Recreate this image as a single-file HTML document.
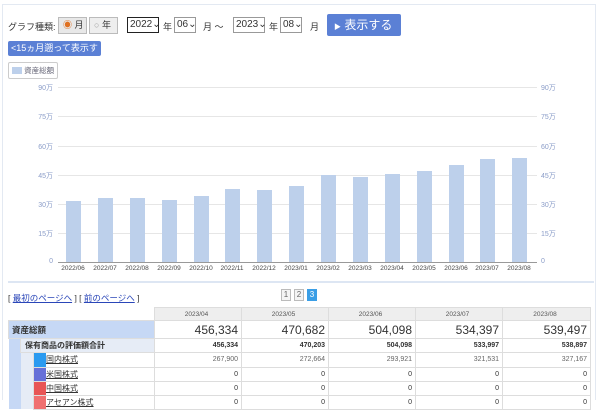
<!DOCTYPE html>
<html><head><meta charset="utf-8"><style>
*{margin:0;padding:0;box-sizing:border-box}
body{width:600px;height:400px;overflow:hidden;background:#fff;font-family:"Liberation Sans","Noto Sans CJK JP",sans-serif;font-size:9px;color:#333;position:relative}
.a{position:absolute}
.sel{position:absolute;border:1px solid #999;height:16px;top:17px;font-size:10px;line-height:14px;padding-left:2px;background:#fff}
.gl{position:absolute;left:58px;width:479px;height:1px;background:#e6e6e6}
.yl{position:absolute;font-size:7px;color:#8a9cc8;width:20px;text-align:right;left:33px}
.yr{position:absolute;font-size:7px;color:#8a9cc8;left:541px}
.bar{position:absolute;width:15px;background:#bdd0eb;bottom:138px}
.xl{position:absolute;top:265px;font-size:6.5px;color:#444;width:32px;text-align:center}
td{border:1px solid #ddd;font-size:7px;text-align:right;padding-right:3px}
</style></head><body>
<div class="a" style="left:2px;top:4px;width:594px;height:1px;background:#e3e9f2"></div>
<div class="a" style="left:2px;top:4px;width:1px;height:396px;background:#e3e9f2"></div>
<div class="a" style="left:595px;top:4px;width:1px;height:396px;background:#e3e9f2"></div>
<div class="a" style="left:8px;top:20px;font-size:9px">グラフ種類:</div>
<div class="a" style="left:58px;top:17px;width:29px;height:17px;border:1px solid #bbb;background:#e8e8e8;font-size:9px;line-height:15px;padding-left:4px"><span style="color:#e07020">◉</span> 月</div>
<div class="a" style="left:89px;top:17px;width:29px;height:17px;border:1px solid #bbb;background:#eee;font-size:9px;line-height:15px;padding-left:4px"><span style="color:#999">○</span> 年</div>
<div class="sel" style="left:127px;width:32px;border:1px solid #222">2022⌄</div>
<div class="a" style="left:163px;top:20px;font-size:9px">年</div>
<div class="sel" style="left:174px;width:22px">06⌄</div>
<div class="a" style="left:203px;top:20px;font-size:9px">月 ～</div>
<div class="sel" style="left:233px;width:32px">2023⌄</div>
<div class="a" style="left:269px;top:20px;font-size:9px">年</div>
<div class="sel" style="left:280px;width:22px">08⌄</div>
<div class="a" style="left:310px;top:20px;font-size:9px">月</div>
<div class="a" style="left:327px;top:14px;width:74px;height:22px;background:#5b80d5;border-radius:2px;color:#fff;font-size:12px;line-height:22px;padding-left:7px"><span style="font-size:7px">▶</span> 表示する</div>
<div class="a" style="left:8px;top:41px;width:93px;height:15px;background:#5b80d5;border-radius:2px;color:#fff;font-size:9px;line-height:15px;padding-left:3px">&lt;15ヵ月遡って表示する</div>
<div class="a" style="left:8px;top:62px;width:50px;height:17px;border:1px solid #ccc;border-radius:2px;font-size:7.5px;line-height:15px;padding-left:3px;color:#667"><span style="display:inline-block;width:10px;height:7px;background:#bdd0eb;vertical-align:-1px"></span> 資産総額</div>

<div class="gl" style="top:87px"></div><div class="gl" style="top:116px"></div><div class="gl" style="top:146px"></div><div class="gl" style="top:175px"></div><div class="gl" style="top:204px"></div><div class="gl" style="top:233px"></div>
<div class="a" style="left:58px;top:262px;width:479px;height:1px;background:#999"></div>
<div class="yl" style="top:83px">90万</div><div class="yl" style="top:112px">75万</div><div class="yl" style="top:142px">60万</div><div class="yl" style="top:171px">45万</div><div class="yl" style="top:200px">30万</div><div class="yl" style="top:229px">15万</div><div class="yl" style="top:258px">0</div>
<div class="yr" style="top:83px">90万</div><div class="yr" style="top:112px">75万</div><div class="yr" style="top:142px">60万</div><div class="yr" style="top:171px">45万</div><div class="yr" style="top:200px">30万</div><div class="yr" style="top:229px">15万</div><div class="yr" style="top:258px">0</div>

<div class="bar" style="left:66px;height:61px"></div>
<div class="bar" style="left:98px;height:64px"></div>
<div class="bar" style="left:130px;height:64px"></div>
<div class="bar" style="left:162px;height:62px"></div>
<div class="bar" style="left:194px;height:66px"></div>
<div class="bar" style="left:225px;height:73px"></div>
<div class="bar" style="left:257px;height:72px"></div>
<div class="bar" style="left:289px;height:76px"></div>
<div class="bar" style="left:321px;height:87px"></div>
<div class="bar" style="left:353px;height:85px"></div>
<div class="bar" style="left:385px;height:88px"></div>
<div class="bar" style="left:417px;height:91px"></div>
<div class="bar" style="left:449px;height:97px"></div>
<div class="bar" style="left:480px;height:103px"></div>
<div class="bar" style="left:512px;height:104px"></div>

<div class="xl" style="left:57px">2022/06</div><div class="xl" style="left:89px">2022/07</div><div class="xl" style="left:121px">2022/08</div><div class="xl" style="left:153px">2022/09</div><div class="xl" style="left:185px">2022/10</div><div class="xl" style="left:216px">2022/11</div><div class="xl" style="left:248px">2022/12</div><div class="xl" style="left:280px">2023/01</div><div class="xl" style="left:312px">2023/02</div><div class="xl" style="left:344px">2023/03</div><div class="xl" style="left:376px">2023/04</div><div class="xl" style="left:408px">2023/05</div><div class="xl" style="left:440px">2023/06</div><div class="xl" style="left:471px">2023/07</div><div class="xl" style="left:503px">2023/08</div>

<div class="a" style="left:8px;top:281px;width:586px;height:2px;background:#dde6f3"></div>
<div class="a" style="left:8px;top:292px;font-size:8.5px">[ <u style="color:#2a46b8">最初のページへ</u> ] [ <u style="color:#2a46b8">前のページへ</u> ]</div>
<div class="a" style="left:281px;top:289px;width:10px;height:12px;border:1px solid #bbb;background:#f4f4f4;font-size:8px;text-align:center;line-height:10px;color:#666">1</div>
<div class="a" style="left:294px;top:289px;width:10px;height:12px;border:1px solid #bbb;background:#f4f4f4;font-size:8px;text-align:center;line-height:10px;color:#666">2</div>
<div class="a" style="left:307px;top:289px;width:10px;height:12px;background:#3a9ee6;font-size:8px;text-align:center;line-height:12px;color:#fff">3</div>

<table class="a" style="left:8px;top:307px;border-collapse:collapse;width:582px;table-layout:fixed">
<colgroup><col style="width:12px"><col style="width:13px"><col style="width:121px"><col style="width:87px"><col style="width:87px"><col style="width:87px"><col style="width:87px"><col style="width:88px"></colgroup>
<tr style="height:13px"><td colspan="3" style="border:none"></td><td style="background:#eee;text-align:center;font-size:6.5px;color:#555">2023/04</td><td style="background:#eee;text-align:center;font-size:6.5px;color:#555">2023/05</td><td style="background:#eee;text-align:center;font-size:6.5px;color:#555">2023/06</td><td style="background:#eee;text-align:center;font-size:6.5px;color:#555">2023/07</td><td style="background:#eee;text-align:center;font-size:6.5px;color:#555">2023/08</td></tr>
<tr style="height:18px"><td colspan="3" style="background:#c6d8f5;text-align:left;font-weight:bold;font-size:8.5px;padding-left:3px">資産総額</td><td style="font-size:12px">456,334</td><td style="font-size:12px">470,682</td><td style="font-size:12px">504,098</td><td style="font-size:12px">534,397</td><td style="font-size:12px">539,497</td></tr>
<tr style="height:14px"><td style="background:#c6d8f5;border:none"></td><td colspan="2" style="background:#e6ecf6;text-align:left;font-weight:bold;font-size:8px;padding-left:4px">保有商品の評価額合計</td><td style="font-weight:bold">456,334</td><td style="font-weight:bold">470,203</td><td style="font-weight:bold">504,098</td><td style="font-weight:bold">533,997</td><td style="font-weight:bold">538,897</td></tr>
<tr style="height:14px"><td style="background:#c6d8f5;border:none"></td><td style="background:#e6ecf6;border:none;padding:0"><div style="margin-left:13px;width:12px;height:14px;background:#2a9af0"></div></td><td style="text-align:left;padding-left:12px;font-size:8px"><u>国内株式</u></td><td style="color:#666">267,900</td><td style="color:#666">272,664</td><td style="color:#666">293,921</td><td style="color:#666">321,531</td><td style="color:#666">327,167</td></tr>
<tr style="height:14px"><td style="background:#c6d8f5;border:none"></td><td style="background:#e6ecf6;border:none;padding:0"><div style="margin-left:13px;width:12px;height:14px;background:#6670d8"></div></td><td style="text-align:left;padding-left:12px;font-size:8px"><u>米国株式</u></td><td>0</td><td>0</td><td>0</td><td>0</td><td>0</td></tr>
<tr style="height:14px"><td style="background:#c6d8f5;border:none"></td><td style="background:#e6ecf6;border:none;padding:0"><div style="margin-left:13px;width:12px;height:14px;background:#e85555"></div></td><td style="text-align:left;padding-left:12px;font-size:8px"><u>中国株式</u></td><td>0</td><td>0</td><td>0</td><td>0</td><td>0</td></tr>
<tr style="height:14px"><td style="background:#c6d8f5;border:none"></td><td style="background:#e6ecf6;border:none;padding:0"><div style="margin-left:13px;width:12px;height:14px;background:#f07070"></div></td><td style="text-align:left;padding-left:12px;font-size:8px"><u>アセアン株式</u></td><td>0</td><td>0</td><td>0</td><td>0</td><td>0</td></tr>
</table>
</body></html>
